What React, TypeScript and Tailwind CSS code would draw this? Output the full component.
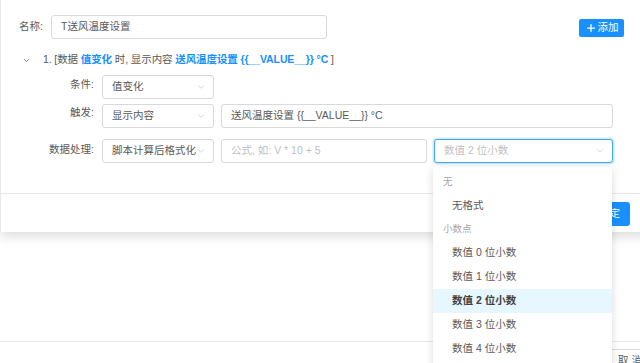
import { ChevronDown, Plus } from "lucide-react";

function Select({ value, placeholder, focused, width }: { value?: string; placeholder?: string; focused?: boolean; width: string }) {
  return (
    <div
      className={`${width} h-[24px] rounded-[3px] bg-white flex items-center pl-[9px] pr-[7px] ${
        focused ? "border border-[#40a9ff] shadow-[0_0_0_1.5px_rgba(24,144,255,0.2)]" : "border border-[#d9d9d9]"
      }`}
    >
      <span className={`whitespace-nowrap ${value ? "text-[#595959]" : "text-[#bfbfbf]"}`}>{value ?? placeholder}</span>
      <ChevronDown className="w-[10px] h-[10px] text-[#bfbfbf] shrink-0 ml-auto" strokeWidth={1.5} />
    </div>
  );
}

function Input({ value, placeholder, width }: { value?: string; placeholder?: string; width: string }) {
  return (
    <div className={`${width} h-[24px] rounded-[3px] border border-[#d9d9d9] bg-white flex items-center px-[9px]`}>
      <span className={value ? "text-[#595959]" : "text-[#bfbfbf]"}>{value ?? placeholder}</span>
    </div>
  );
}

export default function App() {
  const decimals = [0, 1, 2, 3, 4];

  return (
    <div className="relative w-[640px] h-[363px] overflow-hidden bg-white text-[10.5px] text-[#595959] font-['Liberation_Sans','Noto_Sans_CJK_SC',sans-serif]">
      {/* page behind the modal */}
      <div className="h-[341px]" />
      <div className="border-t border-[#e8e8e8] flex justify-end pt-[7px]">
        <div className="w-[40px] h-[24px] rounded-[3px] border border-[#d9d9d9] flex items-center pl-[7px] -mr-[10px] text-[#595959] whitespace-nowrap">取 消</div>
      </div>

      {/* modal */}
      <div className="absolute left-0 top-0 w-[660px] h-[232px] bg-white border-l border-[#e8e8e8] shadow-[0_4px_12px_rgba(0,0,0,0.15)] flex flex-col">
        <div className="h-[193px] pl-[18px] pr-[36px] pt-[15px]">
          <div className="flex items-center">
            <span className="w-[32px]">名称:</span>
            <Input value="T送风温度设置" width="w-[276px]" />
            <div className="flex-1" />
            <div className="h-[18px] w-[45px] rounded-[2px] bg-[#1890ff] text-white flex items-center justify-center gap-[1px] mt-[1px]">
              <Plus className="w-[12px] h-[12px]" strokeWidth={2.5} />
              <span>添加</span>
            </div>
          </div>

          <div className="flex items-center mt-[10px] h-[22px]">
            <ChevronDown className="w-[9px] h-[9px] ml-[3px] text-[#595959]" strokeWidth={2} />
            <span className="ml-[12px] tracking-[-0.1px]">
              1. [数据 <span className="text-[#1890ff] font-semibold">值变化</span> 时, 显示内容{" "}
              <span className="text-[#1890ff] font-semibold">送风温度设置 {"{{__VALUE__}}"} °C</span> ]
            </span>
          </div>

          <div className="flex flex-col mt-[4px]">
            <div className="flex items-center">
              <span className="w-[83px] text-right pr-[8px] -mt-[4px]">条件:</span>
              <Select value="值变化" width="w-[112px]" />
            </div>
            <div className="flex items-center mt-[5px] gap-[7px]">
              <span className="w-[83px] text-right pr-[8px] -mt-[6px] -mr-[7px]">触发:</span>
              <Select value="显示内容" width="w-[112px]" />
              <Input value="送风温度设置 {{__VALUE__}} °C" width="w-[392px]" />
            </div>
            <div className="flex items-center mt-[11px] gap-[7px]">
              <span className="w-[83px] text-right pr-[8px] -mt-[3px] -mr-[7px]">数据处理:</span>
              <Select value="脚本计算后格式化" width="w-[112px]" />
              <Input placeholder="公式, 如: V * 10 + 5" width="w-[206px]" />
              <Select placeholder="数值 2 位小数" focused width="w-[179px]" />
            </div>
          </div>
        </div>

        <div className="flex-1 border-t border-[#e8e8e8] flex items-start justify-end pt-[8px] pr-[30px]">
          <div className="h-[24px] w-[44px] rounded-[3px] bg-[#1890ff] text-white flex items-center justify-center">确 定</div>
        </div>
      </div>

      {/* dropdown menu */}
      <div className="absolute left-[433px] top-[167px] w-[179px] h-[210px] bg-white rounded-[3px] shadow-[0_2px_8px_rgba(0,0,0,0.15)] pt-[3px]">
        <div className="h-[24px] flex items-center pl-[10px] text-[9.5px] text-[#a6a6a6]">无</div>
        <div className="h-[23px] flex items-center pl-[19px]">无格式</div>
        <div className="h-[24px] flex items-center pl-[10px] text-[9.5px] text-[#a6a6a6]">小数点</div>
        {decimals.map((d) => (
          <div
            key={d}
            className={`h-[24px] flex items-center pl-[19px] ${d === 2 ? "bg-[#e6f7ff] font-semibold text-[#404040]" : ""}`}
          >
            数值 {d} 位小数
          </div>
        ))}
      </div>
    </div>
  );
}
